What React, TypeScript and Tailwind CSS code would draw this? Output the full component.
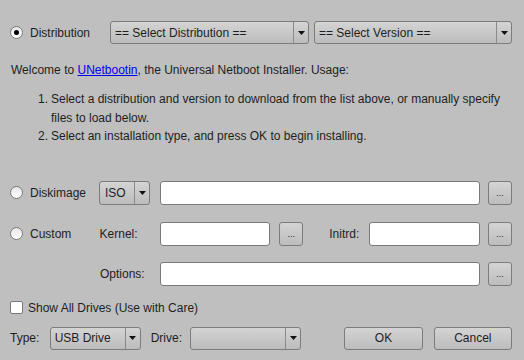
import React from 'react';

function Radio({ checked = false }: { checked?: boolean }) {
  return (
    <span className="flex h-[13px] w-[13px] shrink-0 items-center justify-center rounded-full border border-[#7a7a7a] bg-gradient-to-b from-[#e6e6e6] to-white">
      {checked && <span className="h-[5px] w-[5px] rounded-full bg-black" />}
    </span>
  );
}

function Combo({ label, className }: { label: string; className: string }) {
  return (
    <div
      className={`flex h-[23px] shrink-0 items-stretch rounded-[3px] border border-[#7c7c7c] bg-gradient-to-b from-[#d4d4d4] to-[#bcbcbc] ${className}`}
    >
      <span className="flex flex-1 items-center overflow-hidden whitespace-nowrap pl-[4px]">{label}</span>
      <span className="flex w-[15px] items-center justify-center border-l border-[#8a8a8a]">
        <svg width="7" height="4" viewBox="0 0 7 4">
          <path d="M0 0h7L3.5 4z" fill="#111" />
        </svg>
      </span>
    </div>
  );
}

function Field({ className }: { className: string }) {
  return <div className={`h-[24px] shrink-0 rounded-[3px] border border-[#7a7a7a] bg-white ${className}`} />;
}

function Dots() {
  return (
    <button className="flex h-[24px] w-[24px] shrink-0 items-center justify-center rounded-[3px] border border-[#7c7c7c] bg-gradient-to-b from-[#d4d4d4] to-[#bcbcbc] pt-[2px] text-[9px] leading-none">
      ...
    </button>
  );
}

export default function App() {
  return (
    <div
      className="h-[360px] w-[524px] overflow-hidden bg-[#bfbfbf] pl-[10px] pr-[12px] text-[12px] text-[#1e1e1e]"
      style={{ fontFamily: '"Liberation Sans", Arial, sans-serif' }}
    >
      {/* Distribution row */}
      <div className="mt-[21px] flex h-[23px] items-center">
        <Radio checked />
        <span className="ml-[7px] w-[80px]">Distribution</span>
        <Combo label="== Select Distribution ==" className="w-[199px]" />
        <Combo label="== Select Version ==" className="ml-[5px] w-[198px]" />
      </div>

      {/* Intro */}
      <p className="mt-[17px] pl-px leading-[18px]">
        Welcome to <span className="text-[#0000ee] underline">UNetbootin</span>, the Universal Netboot Installer. Usage:
      </p>
      <ol className="mt-[11px] leading-[18.5px]">
        <li className="flex">
          <span className="w-[38px] shrink-0 text-right">1.</span>
          <span className="pl-[3px]">
            Select a distribution and version to download from the list above, or manually specify files to load below.
          </span>
        </li>
        <li className="flex">
          <span className="w-[38px] shrink-0 text-right">2.</span>
          <span className="pl-[3px]">Select an installation type, and press OK to begin installing.</span>
        </li>
      </ol>

      {/* Diskimage row */}
      <div className="mt-[35px] flex h-[24px] items-center">
        <Radio />
        <span className="ml-[7px] w-[70px]">Diskimage</span>
        <div className="flex h-[24px] w-[51px] shrink-0 items-stretch rounded-[3px] border border-[#7c7c7c] bg-gradient-to-b from-[#d4d4d4] to-[#bcbcbc]">
          <span className="flex flex-1 items-center pl-[5px]">ISO</span>
          <span className="flex w-[15px] items-center justify-center border-l border-[#8a8a8a]">
            <svg width="7" height="4" viewBox="0 0 7 4">
              <path d="M0 0h7L3.5 4z" fill="#111" />
            </svg>
          </span>
        </div>
        <Field className="ml-[10px] w-[320px]" />
        <span className="ml-[8px]">
          <Dots />
        </span>
      </div>

      {/* Custom row */}
      <div className="mt-[17px] flex h-[24px] items-center">
        <Radio />
        <span className="ml-[7px] w-[70px]">Custom</span>
        <span className="w-[61px]">Kernel:</span>
        <Field className="w-[110px]" />
        <span className="ml-[9px]">
          <Dots />
        </span>
        <span className="ml-[26px] w-[40px]">Initrd:</span>
        <Field className="w-[111px]" />
        <span className="ml-[8px]">
          <Dots />
        </span>
      </div>

      {/* Options row */}
      <div className="mt-[16px] flex h-[24px] items-center">
        <span className="ml-[90px] w-[61px]">Options:</span>
        <Field className="w-[320px]" />
        <span className="ml-[8px]">
          <Dots />
        </span>
      </div>

      {/* Show all drives */}
      <div className="mt-[14px] flex h-[16px] items-center">
        <span className="h-[13px] w-[13px] shrink-0 rounded-[2px] border border-[#7a7a7a] bg-white" />
        <span className="ml-[5px]">Show All Drives (Use with Care)</span>
      </div>

      {/* Bottom row */}
      <div className="mt-[11px] flex h-[23px] items-center">
        <span className="w-[40px]">Type:</span>
        <Combo label="USB Drive" className="w-[91px]" />
        <span className="ml-[10px] w-[40px]">Drive:</span>
        <Combo label="" className="w-[111px]" />
        <button className="ml-[43px] h-[23px] w-[79px] rounded-[3px] border border-[#7c7c7c] bg-gradient-to-b from-[#d4d4d4] to-[#bcbcbc]">
          OK
        </button>
        <button className="ml-[11px] h-[23px] w-[79px] rounded-[3px] border border-[#7c7c7c] bg-gradient-to-b from-[#d4d4d4] to-[#bcbcbc]">
          Cancel
        </button>
      </div>
    </div>
  );
}
